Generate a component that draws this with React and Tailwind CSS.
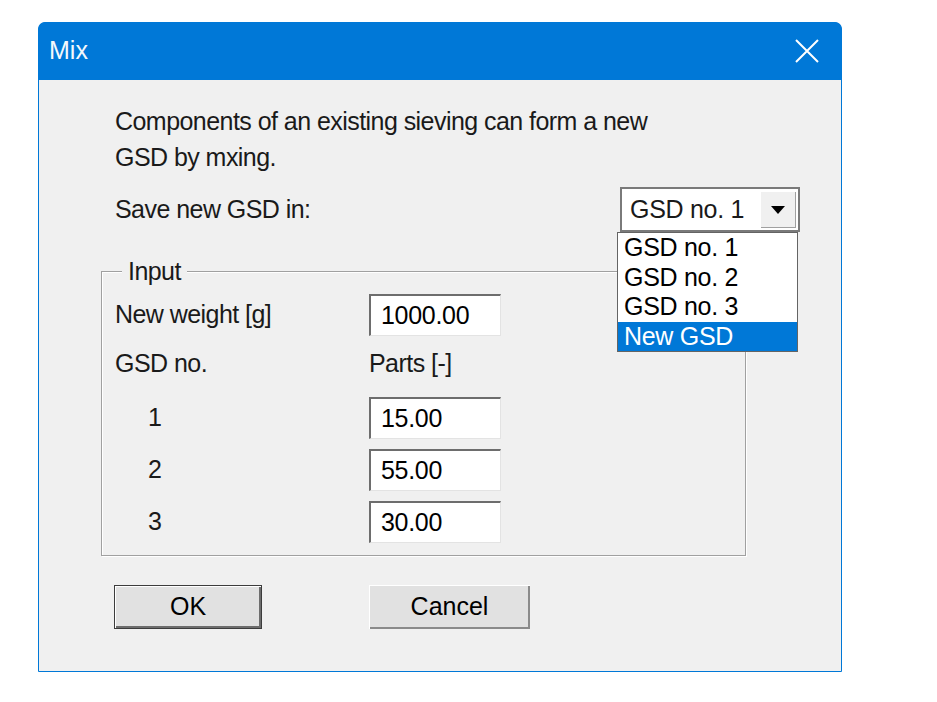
import React from 'react';

const font = { fontFamily: '"Liberation Sans", Arial, sans-serif' };

const Field = ({ value }) => (
  <div className="w-[132px] h-[42px] bg-white border-t-2 border-l-2 border-t-[#6d6d6d] border-l-[#6d6d6d] border-b border-r border-b-[#e3e3e3] border-r-[#e3e3e3] flex items-center pl-[10px] text-[25px] leading-none text-black tracking-[-0.3px]">
    {value}
  </div>
);

const Button = ({ label, primary, width }) => (
  <div
    className={`${width} h-[44px] flex items-center justify-center text-[25px] text-black bg-[#e1e1e1] ${
      primary
        ? 'border border-[#3c3c3c] shadow-[inset_1px_1px_0_#ffffff,inset_-2px_-2px_0_#6d6d6d]'
        : 'shadow-[inset_1px_1px_0_#ffffff,inset_-2px_-2px_0_#8a8a8a]'
    }`}
  >
    {label}
  </div>
);

export default function App() {
  const options = ['GSD no. 1', 'GSD no. 2', 'GSD no. 3', 'New GSD'];

  return (
    <div className="min-h-[702px] bg-white pt-[22px] pl-[38px]" style={font}>
      <div className="w-[804px] h-[650px] border border-[#0078d7] rounded-t-[8px] bg-[#f0f0f0] flex flex-col">
        {/* title bar */}
        <div className="h-[58px] bg-[#0078d7] rounded-t-[7px] flex items-center justify-between pl-[11px] pr-[23px] -mx-px -mt-px">
          <span className="text-[25px] text-[#f4f8fc]">Mix</span>
          <svg width="24" height="24" viewBox="0 0 24 24">
            <path d="M1 1 L23 23 M23 1 L1 23" stroke="#ffffff" strokeWidth="2" />
          </svg>
        </div>

        <div className="pl-[76px] pt-[23px] text-[25px] text-[#1a1a1a] tracking-[-0.55px]">
          <p className="leading-[36px]">Components of an existing sieving can form a new</p>
          <p className="leading-[36px]">GSD by mxing.</p>

          <div className="mt-[12px] w-[685px] h-[45px] flex items-center justify-between">
            <span>Save new GSD in:</span>
            <div className="relative w-[180px] h-[45px] tracking-[-0.3px]">
              <div className="h-full bg-white border-2 border-[#7a7a7a] flex items-center">
                <span className="flex-1 pl-[8px] leading-none">GSD no. 1</span>
                <div className="w-[36px] h-[37px] mr-[2px] bg-[#f0f0f0] shadow-[inset_1px_1px_0_#ffffff,inset_-1px_-1px_0_#a0a0a0] flex items-center justify-center">
                  <svg width="14" height="8" viewBox="0 0 14 8">
                    <path d="M0 0 H14 L7 8 Z" fill="#000" />
                  </svg>
                </div>
              </div>
              <div className="absolute left-[-3px] top-[45px] w-[181px] bg-white border border-[#646464] z-10">
                {options.map((o, i) => (
                  <div
                    key={o}
                    className={`h-[29.5px] flex items-center pl-[6px] leading-none ${
                      i === 3 ? 'bg-[#0078d7] text-white' : 'text-black'
                    }`}
                  >
                    {o}
                  </div>
                ))}
              </div>
            </div>
          </div>
        </div>

        {/* group box */}
        <div className="relative ml-[62px] mt-[39px] w-[645px] h-[285px] border border-[#a0a0a0] shadow-[inset_1px_1px_0_#ffffff,1px_1px_0_#ffffff] text-[25px] text-[#1a1a1a] tracking-[-0.55px]">
          <span className="absolute left-[20px] top-[-17px] px-[6px] bg-[#f0f0f0] leading-[32px]">Input</span>

          <div className="pl-[13px] pt-[21px]">
            <div className="flex items-center h-[43px]">
              <span className="w-[254px]">New weight [g]</span>
              <Field value="1000.00" />
            </div>
            <div className="flex items-center h-[30px] mt-[13px]">
              <span className="w-[254px]">GSD no.</span>
              <span>Parts [-]</span>
            </div>
            <div className="mt-[18px] flex flex-col gap-[10px]">
              {['15.00', '55.00', '30.00'].map((v, i) => (
                <div key={v} className="flex items-center h-[42px]">
                  <span className="w-[254px] pl-[33px]">{i + 1}</span>
                  <Field value={v} />
                </div>
              ))}
            </div>
          </div>
        </div>

        <div className="ml-[75px] mt-[29px] flex gap-[107px]">
          <Button label="OK" primary width="w-[148px]" />
          <Button label="Cancel" width="w-[161px]" />
        </div>
      </div>
    </div>
  );
}
